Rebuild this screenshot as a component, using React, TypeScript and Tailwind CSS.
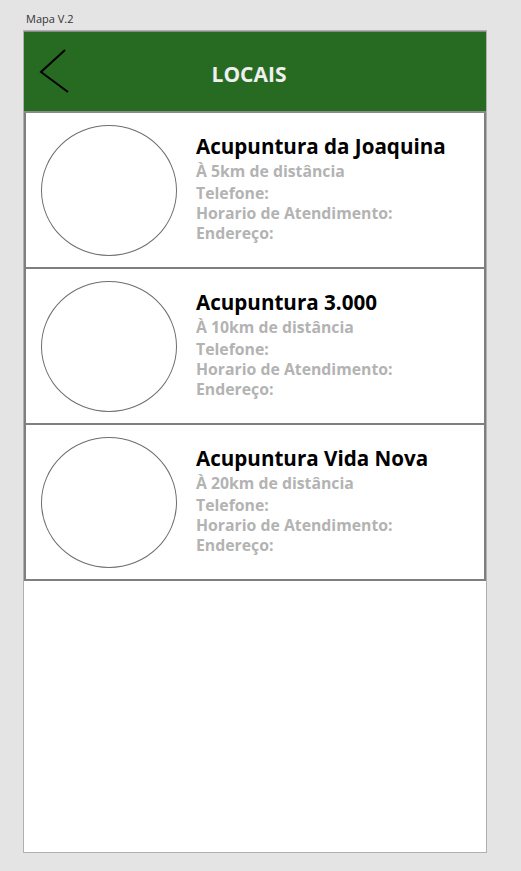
import React from 'react';

interface Local {
  nome: string;
  distancia: string;
}

const locais: Local[] = [
  { nome: 'Acupuntura da Joaquina', distancia: 'À 5km de distância' },
  { nome: 'Acupuntura 3.000', distancia: 'À 10km de distância' },
  { nome: 'Acupuntura Vida Nova', distancia: 'À 20km de distância' },
];

const LocalCard: React.FC<{ local: Local }> = ({ local }) => (
  <div className="h-[156px] flex items-start border-x-2 border-b-2 border-[#7f7f7f] bg-white">
    {/* foto do local */}
    <div className="ml-[15px] mt-[12px] w-[136px] h-[131px] rounded-[50%] border border-[#6e6e6e] shrink-0" />
    <div className="ml-[19px] mt-[20px] flex flex-col">
      <h2 className="text-[20.6px] leading-[26px] font-bold text-black whitespace-nowrap">{local.nome}</h2>
      <p className="text-[15.8px] leading-[24px] font-bold text-[#b3b3b3]">{local.distancia}</p>
      <div className="text-[15.8px] leading-[20px] font-bold text-[#b3b3b3]">
        <p>Telefone:</p>
        <p>Horario de Atendimento:</p>
        <p>Endereço:</p>
      </div>
    </div>
  </div>
);

export default function App() {
  return (
    <div className="min-h-[871px] w-[521px] bg-[#e4e4e4] pt-[12px] font-['Open_Sans','Noto_Sans',sans-serif]">
      <p className="ml-[26px] text-[11px] leading-[14px] text-[#333]">Mapa V.2</p>
      <div className="ml-[23px] mt-[4px] w-[464px] h-[823px] border border-[#b0b0b0] bg-white flex flex-col">
        {/* Header */}
        <header className="relative h-[82px] bg-[#276b22] border-t border-b-2 border-[#8a8a8a] flex items-center justify-center pr-[12px] pt-[6px]">
          <svg className="absolute left-[14px] top-[16px]" width="34" height="46" viewBox="0 0 34 46">
            <polyline points="27,2 3,24 30,44" fill="none" stroke="#000" strokeWidth="2" />
          </svg>
          <span className="text-[21px] font-bold text-[#efefef]">LOCAIS</span>
        </header>
        {locais.map((l) => (
          <LocalCard key={l.nome} local={l} />
        ))}
      </div>
    </div>
  );
}
